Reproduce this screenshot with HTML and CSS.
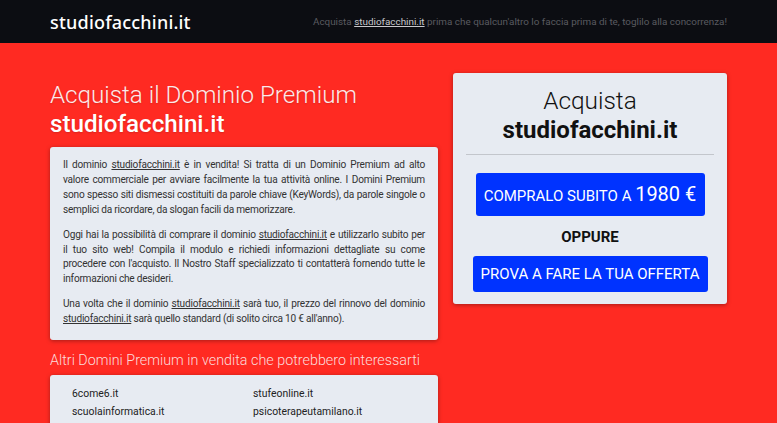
FILE: index.html
```html
<!DOCTYPE html>
<html lang="it">
<head>
<meta charset="utf-8">
<title>studiofacchini.it</title>
<link rel="stylesheet" href="styles.css">
</head>
<body>
<header class="topbar">
  <div class="logo">studiofacchini.it</div>
  <div class="tagline">Acquista <u class="tag-domain">studiofacchini.it</u> prima che qualcun'altro lo faccia prima di te, toglilo alla concorrenza!</div>
</header>
<main class="main">
  <section class="left">
    <h1 class="title"><span class="title-light">Acquista il Dominio Premium</span><br><span class="title-bold">studiofacchini.it</span></h1>
    <div class="card text-card">
      <p>Il dominio <u>studiofacchini.it</u> è in vendita! Si tratta di un Dominio Premium ad alto valore commerciale per avviare facilmente la tua attività online. I Domini Premium sono spesso siti dismessi costituiti da parole chiave (KeyWords), da parole singole o semplici da ricordare, da slogan facili da memorizzare.</p>
      <p>Oggi hai la possibilità di comprare il dominio <u>studiofacchini.it</u> e utilizzarlo subito per il&nbsp;tuo sito web! Compila il modulo e richiedi informazioni dettagliate su come procedere con l'acquisto. Il Nostro Staff specializzato ti contatterà fornendo tutte le informazioni che desideri.</p>
      <p>Una volta che il dominio <u>studiofacchini.it</u> sarà tuo, il prezzo del rinnovo del dominio <u>studiofacchini.it</u> sarà quello standard (di solito circa 10 € all'anno).</p>
    </div>
    <h2 class="subtitle">Altri Domini Premium in vendita che potrebbero interessarti</h2>
    <div class="card list-card">
      <span>6come6.it</span><span>stufeonline.it</span>
      <span>scuolainformatica.it</span><span>psicoterapeutamilano.it</span>
    </div>
  </section>
  <aside class="card buy-card">
    <div class="buy-title"><span class="buy-light">Acquista</span><br><span class="buy-bold">studiofacchini.it</span></div>
    <hr class="sep">
    <a class="btn btn-buy" href="#">COMPRALO SUBITO A <span class="price">1980 €</span></a>
    <div class="oppure">OPPURE</div>
    <a class="btn btn-offer" href="#">PROVA A FARE LA TUA OFFERTA</a>
  </aside>
</main>
</body>
</html>
```
FILE: styles.css
```css
html, body {
  margin: 0;
  padding: 0;
}
body {
  background: #ff2a22;
  font-family: Roboto, "Liberation Sans", sans-serif;
  height: 423px;
  overflow: hidden;
}
.topbar {
  height: 43px;
  background: #0c0d12;
  display: flex;
  align-items: center;
  justify-content: space-between;
  padding: 0 50px;
}
.logo {
  font-family: "Noto Sans", sans-serif;
  font-weight: 500;
  font-size: 18px;
  color: #ffffff;
  letter-spacing: 0.2px;
}
.tagline {
  font-family: Roboto, sans-serif;
  font-size: 9.9px;
  color: #5a5b60;
}
.tag-domain {
  color: #c8c8cc;
}
.main {
  display: flex;
  gap: 15px;
  padding: 0 50px;
  align-items: flex-start;
}
.left {
  width: 388px;
  flex: none;
}
.title {
  margin: 38px 0 8px;
  font-size: 24.2px;
  line-height: 29px;
  color: #ffffff;
  font-weight: 300;
  text-shadow: 0 1px 2px rgba(0,0,0,0.15);
}
.title-light {
  color: #fbeaea;
}
.title-bold {
  font-weight: 500;
}
.card {
  background: #e7ebf2;
  border-radius: 3px;
  box-shadow: 0 1px 4px rgba(0,0,0,0.35);
}
.text-card {
  padding: 11px 13px 3px;
  font-size: 10.1px;
  letter-spacing: -0.22px;
  line-height: 14.9px;
  color: #333;
  text-align: justify;
}
.text-card p {
  margin: 0 0 10px;
}
.subtitle {
  margin: 11px 0 4px;
  font-size: 14.35px;
  line-height: 20px;
  font-weight: 300;
  color: #fbdcdc;
}
.list-card {
  display: grid;
  grid-template-columns: 181px 1fr;
  row-gap: 3px;
  padding: 11px 22px 20px;
  font-size: 10.4px;
  line-height: 15px;
  color: #222;
}
.buy-card {
  margin-top: 30px;
  width: 274px;
  flex: none;
  box-sizing: border-box;
  padding: 13px 13px 12px;
  display: flex;
  flex-direction: column;
  align-items: center;
}
.buy-title {
  text-align: center;
  color: #111;
  font-size: 24.4px;
  line-height: 29px;
}
.buy-light {
  font-weight: 300;
}
.buy-bold {
  font-weight: 700;
  font-size: 24px;
}
.sep {
  align-self: stretch;
  border: 0;
  border-top: 1px solid #c3c6cc;
  margin: 9px 0 18px;
}
.btn {
  display: block;
  background: #0033ff;
  color: #fff;
  text-decoration: none;
  border-radius: 3px;
  text-align: center;
  font-size: 15px;
  letter-spacing: 0;
}
.btn-buy {
  width: 229px;
  line-height: 43px;
  height: 43px;
}
.price {
  font-size: 20px;
}
.oppure {
  font-weight: 700;
  font-size: 15px;
  color: #111;
  margin: 12px 0 10px;
}
.btn-offer {
  width: 235px;
  height: 36px;
  line-height: 36px;
}
```
